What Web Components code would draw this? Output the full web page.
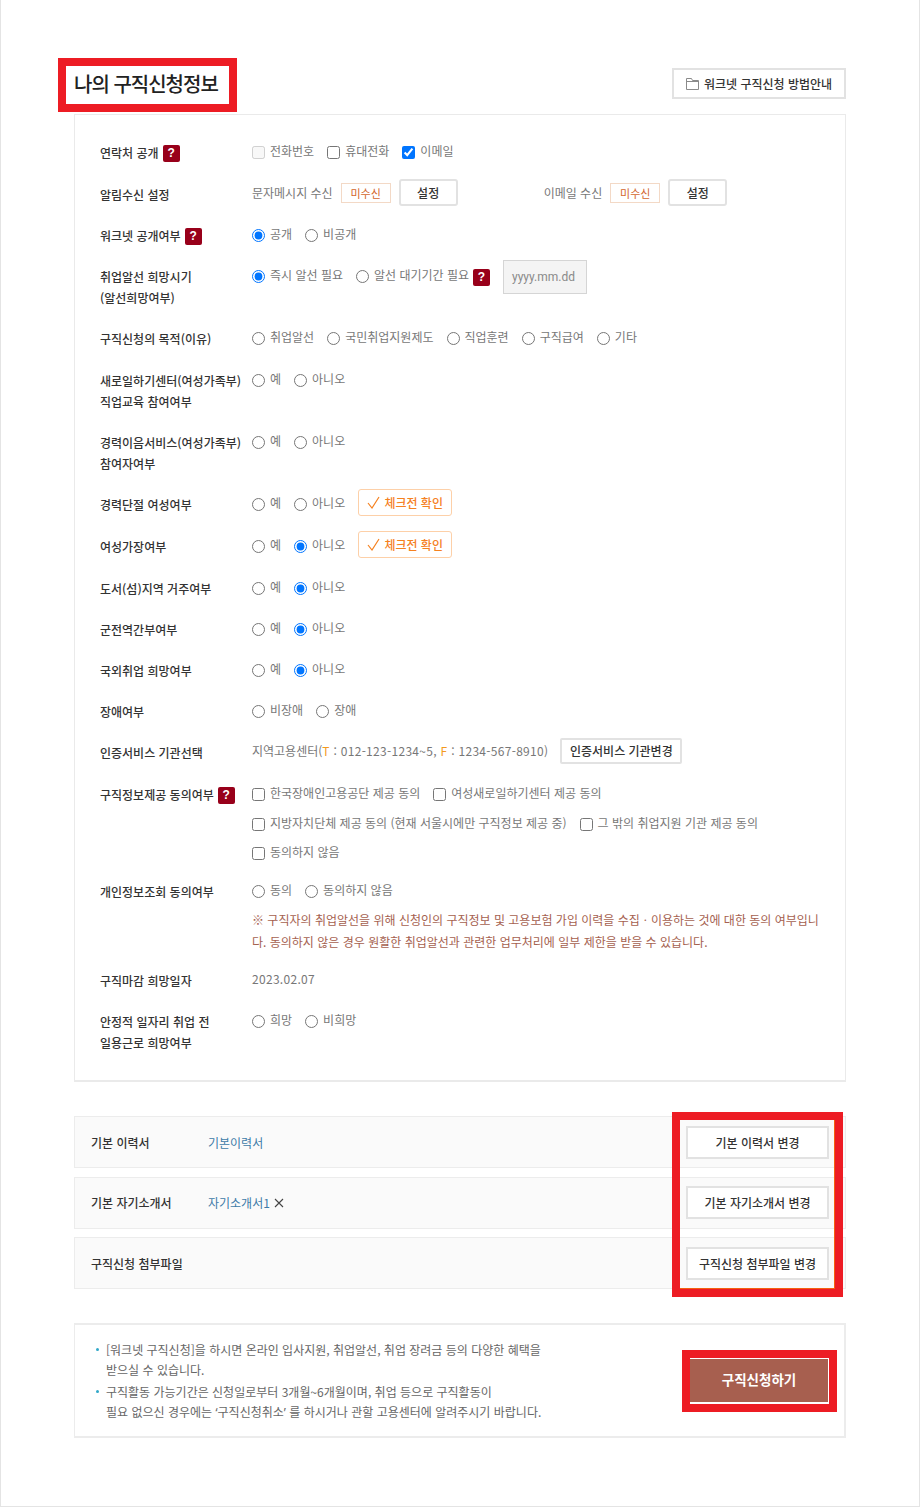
<!DOCTYPE html>
<html lang="ko">
<head>
<meta charset="utf-8">
<title>나의 구직신청정보</title>
<style>
    html, body { margin: 0; padding: 0; background: #fff; }
    body { font-family: "Noto Sans CJK KR", "Noto Sans", sans-serif; }
    .q { font-family: "Noto Sans", sans-serif; }
</style>
</head>
<body>
<job-page>
    <page-head>
        <span slot="title">나의 구직신청정보</span>
        <guide-button>워크넷 구직신청 방법안내</guide-button>
    </page-head>

    <form-card>
        <form-row label="연락처 공개" help>
            <x-check disabled>전화번호</x-check>
            <x-check>휴대전화</x-check>
            <x-check checked>이메일</x-check>
        </form-row>
        <form-row label="알림수신 설정" style="--row-top:1px">
            <notice-set label="문자메시지 수신"></notice-set>
            <notice-set label="이메일 수신" style="margin-left:73px"></notice-set>
        </form-row>
        <form-row label="워크넷 공개여부" help>
            <x-radio checked>공개</x-radio>
            <x-radio>비공개</x-radio>
        </form-row>
        <form-row label="취업알선 희망시기" label2="(알선희망여부)">
            <x-radio checked>즉시 알선 필요</x-radio>
            <x-radio>알선 대기기간 필요</x-radio>
            <help-badge style="margin:5px 0 0 -9px"></help-badge>
            <date-box style="margin-top:5px">yyyy.mm.dd</date-box>
        </form-row>
        <form-row label="구직신청의 목적(이유)">
            <x-radio>취업알선</x-radio>
            <x-radio>국민취업지원제도</x-radio>
            <x-radio>직업훈련</x-radio>
            <x-radio>구직급여</x-radio>
            <x-radio>기타</x-radio>
        </form-row>
        <form-row label="새로일하기센터(여성가족부)" label2="직업교육 참여여부" style="--row-top:1px">
            <x-radio>예</x-radio>
            <x-radio>아니오</x-radio>
        </form-row>
        <form-row label="경력이음서비스(여성가족부)" label2="참여자여부">
            <x-radio>예</x-radio>
            <x-radio>아니오</x-radio>
        </form-row>
        <form-row label="경력단절 여성여부">
            <x-radio>예</x-radio>
            <x-radio>아니오</x-radio>
            <check-button>체크전 확인</check-button>
        </form-row>
        <form-row label="여성가장여부" style="--row-top:1px">
            <x-radio>예</x-radio>
            <x-radio checked>아니오</x-radio>
            <check-button>체크전 확인</check-button>
        </form-row>
        <form-row label="도서(섬)지역 거주여부" style="--row-top:1px">
            <x-radio>예</x-radio>
            <x-radio checked>아니오</x-radio>
        </form-row>
        <form-row label="군전역간부여부">
            <x-radio>예</x-radio>
            <x-radio checked>아니오</x-radio>
        </form-row>
        <form-row label="국외취업 희망여부">
            <x-radio>예</x-radio>
            <x-radio checked>아니오</x-radio>
        </form-row>
        <form-row label="장애여부">
            <x-radio>비장애</x-radio>
            <x-radio>장애</x-radio>
        </form-row>
        <form-row label="인증서비스 기관선택">
            <service-info></service-info>
            <plain-button style="--w:122px;--h:26px;margin-left:-1px">인증서비스 기관변경</plain-button>
        </form-row>
        <form-row label="구직정보제공 동의여부" help style="--row-top:1px;--content-h:79px">
            <check-stack>
                <div><x-check>한국장애인고용공단 제공 동의</x-check><x-check>여성새로일하기센터 제공 동의</x-check></div>
                <div><x-check>지방자치단체 제공 동의 (현재 서울시에만 구직정보 제공 중)</x-check><x-check>그 밖의 취업지원 기관 제공 동의</x-check></div>
                <div><x-check>동의하지 않음</x-check></div>
            </check-stack>
        </form-row>
        <form-row label="개인정보조회 동의여부" style="--content-h:71px">
            <note-stack>
                <div><x-radio>동의</x-radio><x-radio>동의하지 않음</x-radio></div>
                <p>※ 구직자의 취업알선을 위해 신청인의 구직정보 및 고용보험 가입 이력을 수집ㆍ이용하는 것에 대한 동의 여부입니다. 동의하지 않은 경우 원활한 취업알선과 관련한 업무처리에 일부 제한을 받을 수 있습니다.</p>
            </note-stack>
        </form-row>
        <form-row label="구직마감 희망일자">
            <plain-text>2023.02.07</plain-text>
        </form-row>
        <form-row label="안정적 일자리 취업 전" label2="일용근로 희망여부" style="--row-bottom:0">
            <x-radio>희망</x-radio>
            <x-radio>비희망</x-radio>
        </form-row>
    </form-card>

    <doc-list>
        <doc-row label="기본 이력서" action="기본 이력서 변경"><doc-link>기본이력서</doc-link></doc-row>
        <doc-row label="기본 자기소개서" action="기본 자기소개서 변경"><doc-link removable>자기소개서1</doc-link></doc-row>
        <doc-row label="구직신청 첨부파일" action="구직신청 첨부파일 변경"></doc-row>
    </doc-list>

    <apply-box>
        <li>[워크넷 구직신청]을 하시면 온라인 입사지원, 취업알선, 취업 장려금 등의 다양한 혜택을<br>받으실 수 있습니다.</li>
        <li>구직활동 가능기간은 신청일로부터 3개월~6개월이며, 취업 등으로 구직활동이<br>필요 없으신 경우에는 <span class="q">‘</span>구직신청취소<span class="q">’</span> 를 하시거나 관할 고용센터에 알려주시기 바랍니다.</li>
    </apply-box>
</job-page>

<script>
const FONT = '"Noto Sans CJK KR", "Noto Sans", sans-serif';

class JobPage extends HTMLElement {
    connectedCallback() {
        const shadowRoot = this.attachShadow({ mode: 'open' });
        shadowRoot.innerHTML = `
        <style>
            :host {
                display: block;
                box-sizing: border-box;
                width: 920px;
                height: 1507px;
                padding: 68px 74px 0;
                border: solid #e4e4e4;
                border-width: 0 1px 1px;
                font-family: ${FONT};
                color: #333;
                overflow: hidden;
            }
            .frame { margin: 0 -1px; }
        </style>
        <div class="frame"><slot></slot></div>
        `;
    }
}

class RedBox extends HTMLElement {
    connectedCallback() {
        const shadowRoot = this.attachShadow({ mode: 'open' });
        shadowRoot.innerHTML = `
        <style>
            :host {
                display: block;
                position: absolute;
                box-sizing: border-box;
                border: 8px solid #ed1c24;
                pointer-events: none;
            }
        </style>
        `;
    }
}

class PageHead extends HTMLElement {
    connectedCallback() {
        const shadowRoot = this.attachShadow({ mode: 'open' });
        shadowRoot.innerHTML = `
        <style>
            :host {
                display: flex;
                justify-content: space-between;
                align-items: flex-start;
                height: 46px;
            }
            h2 {
                position: relative;
                margin: 0;
                font-size: 20px;
                line-height: 32px;
                font-weight: 500;
                color: #222;
                letter-spacing: -1px;
            }
            red-box { left: -16px; top: -10px; width: 179px; height: 54px; }
        </style>
        <h2><slot name="title"></slot><red-box></red-box></h2>
        <slot></slot>
        `;
    }
}

class GuideButton extends HTMLElement {
    connectedCallback() {
        const shadowRoot = this.attachShadow({ mode: 'open' });
        shadowRoot.innerHTML = `
        <style>
            :host {
                display: flex;
                align-items: center;
                box-sizing: border-box;
                width: 174px;
                height: 31px;
                padding-left: 12px;
                gap: 5px;
                background: #fff;
                border: 2px solid #e2e2e2;
                font-size: 12px;
                font-weight: 500;
                color: #333;
                white-space: nowrap;
            }
            svg { flex: none; }
        </style>
        <svg width="13" height="12" viewBox="0 0 13 12" fill="none" stroke="#8a8a8a">
            <path d="M.5 11.5V.5h5l1 2h6v9z" fill="#fff"/>
            <path d="M.5 3.5h12"/>
        </svg>
        <slot></slot>
        `;
    }
}

class FormCard extends HTMLElement {
    connectedCallback() {
        const shadowRoot = this.attachShadow({ mode: 'open' });
        shadowRoot.innerHTML = `
        <style>
            :host {
                display: block;
                box-sizing: border-box;
                width: 772px;
                height: 968px;
                padding: 27px 25px 0 25px;
                border: 1px solid #eaeaea;
                border-width: 1px 1px 2px 1px;
            }
        </style>
        <slot></slot>
        `;
    }
}

class FormRow extends HTMLElement {
    connectedCallback() {
        const shadowRoot = this.attachShadow({ mode: 'open' });
        const label = this.getAttribute('label') || '';
        const label2 = this.getAttribute('label2');
        const help = this.hasAttribute('help') ? '<help-badge style="margin-top:2px"></help-badge>' : '';
        shadowRoot.innerHTML = `
        <style>
            :host {
                display: grid;
                grid-template-columns: 152px 1fr;
                padding-top: var(--row-top, 0);
                margin-bottom: var(--row-bottom, 20px);
            }
            .label {
                font-size: 12px;
                line-height: 21px;
                font-weight: 500;
                color: #333;
                white-space: nowrap;
            }
            .label div { display: flex; align-items: center; gap: 4px; height: 21px; }
            .content {
                display: flex;
                align-items: center;
                gap: 13px;
                height: var(--content-h, 21px);
                margin-top: -2px;
                align-self: start;
            }
        </style>
        <div class="label">
            <div><span>${label}</span>${help}</div>
            ${label2 ? `<div><span>${label2}</span></div>` : ''}
        </div>
        <div class="content"><slot></slot></div>
        `;
    }
}

class ToggleBase extends HTMLElement {
    render(type) {
        const shadowRoot = this.attachShadow({ mode: 'open' });
        const attrs = (this.hasAttribute('checked') ? ' checked' : '') + (this.hasAttribute('disabled') ? ' disabled' : '');
        shadowRoot.innerHTML = `
        <style>
            :host { display: block; white-space: nowrap; }
            label {
                display: flex;
                align-items: center;
                height: 21px;
                padding-top: 2px;
                margin-bottom: -2px;
                font-size: 12px;
                color: #777;
                gap: 5px;
            }
            input { width: 13px; height: 13px; margin: 0; flex: none; }
            span { position: relative; top: -2px; }
        </style>
        <label><input type="${type}"${attrs}><span><slot></slot></span></label>
        `;
    }
}

class XCheck extends ToggleBase {
    connectedCallback() { this.render('checkbox'); }
}

class XRadio extends ToggleBase {
    connectedCallback() { this.render('radio'); }
}

class HelpBadge extends HTMLElement {
    connectedCallback() {
        const shadowRoot = this.attachShadow({ mode: 'open' });
        shadowRoot.innerHTML = `
        <style>
            :host {
                display: inline-block;
                flex: none;
                width: 17px;
                height: 17px;
                border-radius: 2px;
                background: #98001a;
                color: #fff;
                font: 700 12px/17px "Liberation Sans", sans-serif;
                text-align: center;
            }
        </style>
        ?
        `;
    }
}

class NoticeSet extends HTMLElement {
    connectedCallback() {
        const shadowRoot = this.attachShadow({ mode: 'open' });
        shadowRoot.innerHTML = `
        <style>
            :host {
                display: inline-flex;
                align-items: center;
                font-size: 12px;
                color: #777;
                white-space: nowrap;
            }
            .tag {
                box-sizing: border-box;
                width: 50px;
                height: 20px;
                margin: 0 8px;
                border: 1px solid #f3d9c6;
                color: #d2662c;
                font-size: 11px;
                line-height: 18px;
                text-align: center;
            }
        </style>
        <span>${this.getAttribute('label')}</span>
        <span class="tag">미수신</span>
        <plain-button style="--w:59px;--h:27px;--r:3px">설정</plain-button>
        `;
    }
}

class PlainButton extends HTMLElement {
    connectedCallback() {
        const shadowRoot = this.attachShadow({ mode: 'open' });
        shadowRoot.innerHTML = `
        <style>
            :host {
                display: inline-flex;
                align-items: center;
                justify-content: center;
                flex: none;
                box-sizing: border-box;
                width: var(--w, 143px);
                height: var(--h, 33px);
                background: #fff;
                border: 2px solid #e2e2e2;
                border-radius: var(--r, 2px);
                font-size: 12px;
                font-weight: 500;
                color: #333;
                white-space: nowrap;
            }
        </style>
        <slot></slot>
        `;
    }
}

class DateBox extends HTMLElement {
    connectedCallback() {
        const shadowRoot = this.attachShadow({ mode: 'open' });
        shadowRoot.innerHTML = `
        <style>
            :host {
                display: inline-block;
                box-sizing: border-box;
                width: 84px;
                height: 34px;
                background: #f4f4f4;
                border: 1px solid #d5d5d5;
                font: 12px/32px "Roboto", sans-serif;
                color: #8a8a8a;
                padding-left: 8px;
                flex: none;
            }
        </style>
        <slot></slot>
        `;
    }
}

class CheckButton extends HTMLElement {
    connectedCallback() {
        const shadowRoot = this.attachShadow({ mode: 'open' });
        shadowRoot.innerHTML = `
        <style>
            :host {
                display: inline-flex;
                align-items: center;
                justify-content: center;
                gap: 4px;
                box-sizing: border-box;
                width: 94px;
                height: 27px;
                border: 1px solid #fdd0a8;
                border-radius: 3px;
                background: #fff;
                color: #f5811f;
                font-size: 12px;
                font-weight: 500;
                white-space: nowrap;
                flex: none;
            }
        </style>
        <svg width="13" height="13" viewBox="0 0 13 13" fill="none" stroke="#f5811f" stroke-width="1.2">
            <path d="M1 7l4 5 7-11"/>
        </svg>
        <slot></slot>
        `;
    }
}

class ServiceInfo extends HTMLElement {
    connectedCallback() {
        const shadowRoot = this.attachShadow({ mode: 'open' });
        shadowRoot.innerHTML = `
        <style>
            :host { font-size: 12px; color: #777; white-space: nowrap; }
            b { font-weight: 400; color: #f39a1d; }
            span { letter-spacing: .3px; }
        </style>
        지역고용센터(<span><b>T</b> : 012-123-1234~5, <b>F</b> : 1234-567-8910)</span>
        `;
    }
}

class CheckStack extends HTMLElement {
    connectedCallback() {
        const shadowRoot = this.attachShadow({ mode: 'open' });
        shadowRoot.innerHTML = `
        <style>
            :host { display: flex; flex-direction: column; gap: 8.5px; align-self: flex-start; }
            ::slotted(div) { display: flex; gap: 13px; }
        </style>
        <slot></slot>
        `;
    }
}

class NoteStack extends HTMLElement {
    connectedCallback() {
        const shadowRoot = this.attachShadow({ mode: 'open' });
        shadowRoot.innerHTML = `
        <style>
            :host { display: block; width: 568px; align-self: flex-start; }
            ::slotted(div) { display: flex; gap: 13px; }
            ::slotted(p) {
                margin: 8.5px 0 0;
                font-size: 12px;
                line-height: 22px;
                color: #a5614f;
                word-break: break-all;
            }
        </style>
        <slot></slot>
        `;
    }
}

class PlainText extends HTMLElement {
    connectedCallback() {
        const shadowRoot = this.attachShadow({ mode: 'open' });
        shadowRoot.innerHTML = `
        <style>
            :host { font-size: 12px; color: #777; line-height: 21px; letter-spacing: .3px; }
        </style>
        <slot></slot>
        `;
    }
}

class DocList extends HTMLElement {
    connectedCallback() {
        const shadowRoot = this.attachShadow({ mode: 'open' });
        shadowRoot.innerHTML = `
        <style>
            :host {
                display: flex;
                flex-direction: column;
                gap: 8.5px;
                position: relative;
                width: 772px;
                margin-top: 34px;
            }
            red-box {
                left: 598px; top: -4px; width: 171px; height: 185px;
                box-shadow: inset -1px -1px 0 #f5600f;
            }
        </style>
        <slot></slot>
        <red-box></red-box>
        `;
    }
}

class DocRow extends HTMLElement {
    connectedCallback() {
        const shadowRoot = this.attachShadow({ mode: 'open' });
        shadowRoot.innerHTML = `
        <style>
            :host {
                display: grid;
                grid-template-columns: 117px 1fr auto;
                align-items: center;
                box-sizing: border-box;
                height: 52px;
                padding: 0 16px;
                background: #fafafa;
                border: 1px solid #ececec;
                font-size: 12px;
            }
            .name { font-weight: 500; color: #333; }
        </style>
        <span class="name">${this.getAttribute('label')}</span>
        <span><slot></slot></span>
        <plain-button style="--r:0">${this.getAttribute('action')}</plain-button>
        `;
    }
}

class DocLink extends HTMLElement {
    connectedCallback() {
        const shadowRoot = this.attachShadow({ mode: 'open' });
        const removable = this.hasAttribute('removable');
        shadowRoot.innerHTML = `
        <style>
            :host { display: inline-flex; align-items: center; gap: 4px; color: #3d7aa8; }
        </style>
        <slot></slot>
        ${removable ? `<svg width="10" height="10" viewBox="0 0 10 10" stroke="#444" stroke-width="1.1"><path d="M1 1l8 8M9 1L1 9"/></svg>` : ''}
        `;
    }
}

class ApplyBox extends HTMLElement {
    connectedCallback() {
        const shadowRoot = this.attachShadow({ mode: 'open' });
        shadowRoot.innerHTML = `
        <style>
            :host {
                display: flex;
                justify-content: space-between;
                position: relative;
                box-sizing: border-box;
                width: 772px;
                height: 115px;
                margin-top: 34px;
                padding: 15px 0 0 21px;
                border: 1px solid #ececec;
                border-width: 2px 2px 2px 1px;
            }
            ul { margin: 0; padding: 0; list-style: none; }
            ::slotted(li) {
                position: relative;
                padding-left: 10px;
                font-size: 12px;
                line-height: 20px;
                color: #666;
                white-space: nowrap;
                list-style: none;
            }
            ::slotted(li:last-child) { margin-top: 1.5px; }
            ::slotted(li)::before {
                content: "";
                position: absolute;
                left: 0;
                top: 8px;
                width: 3px;
                height: 3px;
                border-radius: 50%;
                background: #31a8c9;
            }
            .submit {
                position: absolute;
                left: 607px;
                top: 25px;
                box-sizing: border-box;
                width: 155px;
                height: 62px;
                border: 8px solid #ed1c24;
            }
            .submit div {
                box-sizing: border-box;
                height: 100%;
                background: #a75f4f;
                border: 1px solid #fff;
                border-width: 1px 1px 2px 0;
                color: #fff;
                font-size: 13.5px;
                font-weight: 700;
                line-height: 41px;
                text-align: center;
            }
        </style>
        <ul><slot></slot></ul>
        <div class="submit"><div>구직신청하기</div></div>
        `;
    }
}

customElements.define('job-page', JobPage);
customElements.define('red-box', RedBox);
customElements.define('page-head', PageHead);
customElements.define('guide-button', GuideButton);
customElements.define('form-card', FormCard);
customElements.define('form-row', FormRow);
customElements.define('x-check', XCheck);
customElements.define('x-radio', XRadio);
customElements.define('help-badge', HelpBadge);
customElements.define('notice-set', NoticeSet);
customElements.define('plain-button', PlainButton);
customElements.define('date-box', DateBox);
customElements.define('check-button', CheckButton);
customElements.define('service-info', ServiceInfo);
customElements.define('check-stack', CheckStack);
customElements.define('note-stack', NoteStack);
customElements.define('plain-text', PlainText);
customElements.define('doc-list', DocList);
customElements.define('doc-row', DocRow);
customElements.define('doc-link', DocLink);
customElements.define('apply-box', ApplyBox);
</script>
</body>
</html>
